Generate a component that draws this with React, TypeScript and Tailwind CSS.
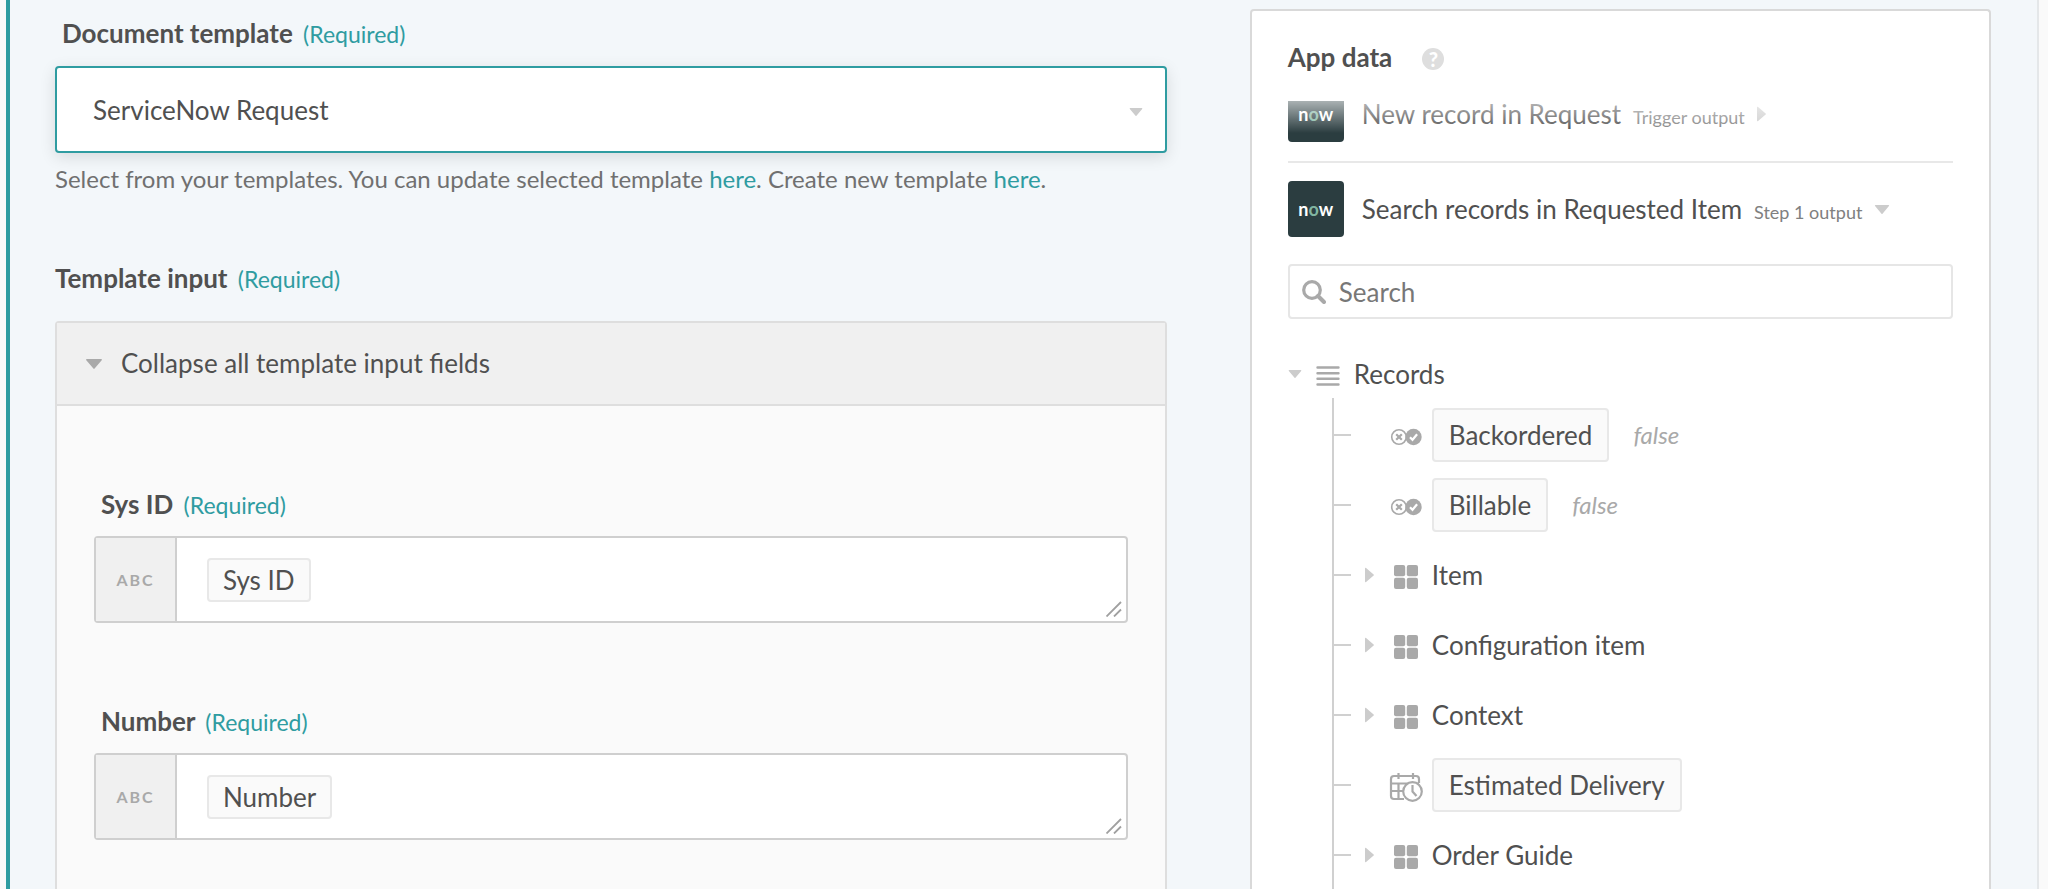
import { useState } from "react"

const FIELDS = [
  { id: "sys-id", label: "Sys ID", pill: "Sys ID" },
  { id: "number", label: "Number", pill: "Number" },
]

type Kind = "boolean" | "object" | "date"

interface RecordProps {
  name: string
  kind: Kind
  sample?: string
}

const RECORDS: RecordProps[] = [
  { name: "Backordered", kind: "boolean", sample: "false" },
  { name: "Billable", kind: "boolean", sample: "false" },
  { name: "Item", kind: "object" },
  { name: "Configuration item", kind: "object" },
  { name: "Context", kind: "object" },
  { name: "Estimated Delivery", kind: "date" },
  { name: "Order Guide", kind: "object" },
]

function CaretDown({ className }: { className: string }) {
  return (
    <svg viewBox="0 0 16 10" className={className} fill="currentColor" aria-hidden="true">
      <path d="M0.8 0h14.4c.7 0 1 .7.5 1.2L8.6 9.6a.8.8 0 0 1-1.2 0L.3 1.2C-.2.7.1 0 .8 0z" />
    </svg>
  )
}

function CaretRight({ className }: { className: string }) {
  return (
    <svg viewBox="0 0 10 16" className={className} fill="currentColor" aria-hidden="true">
      <path d="M0 .8v14.4c0 .7.7 1 1.2.5L9.6 8.6a.8.8 0 0 0 0-1.2L1.2.3C.7-.2 0 .1 0 .8z" />
    </svg>
  )
}

function BooleanIcon() {
  return (
    <svg viewBox="0 0 32 18" className="h-[18px] w-8" fill="none" aria-hidden="true">
      <circle cx="9" cy="9" r="7.3" stroke="#a9a9a9" strokeWidth="1.6" />
      <path d="M6.2 6.2l5.6 5.6M11.8 6.2l-5.6 5.6" stroke="#a9a9a9" strokeWidth="2.2" />
      <circle cx="23.5" cy="9" r="8.2" fill="#a9a9a9" />
      <path d="M20 9.3l2.5 2.5 4.6-5.5" stroke="#fff" strokeWidth="2.2" />
    </svg>
  )
}

function ObjectIcon() {
  return (
    <svg viewBox="0 0 24 24" className="size-6" fill="#a9a9a9" aria-hidden="true">
      <rect x="0" y="0" width="11.2" height="11.2" rx="2" />
      <rect x="12.8" y="0" width="11.2" height="11.2" rx="2" />
      <rect x="0" y="12.8" width="11.2" height="11.2" rx="2" />
      <rect x="12.8" y="12.8" width="11.2" height="11.2" rx="2" />
    </svg>
  )
}

function DateIcon() {
  return (
    <svg viewBox="0 0 34 30" className="h-[30px] w-[34px]" fill="none" stroke="#a9a9a9" strokeWidth="2.2" aria-hidden="true">
      <path d="M15 27H5a3 3 0 0 1-3-3V7a3 3 0 0 1 3-3h22a3 3 0 0 1 3 3v4M2 11.5h28M2 19h13M9.5 11.5V27M17 11.5v3M9.5 1v6M24 1v6" />
      <circle cx="23.5" cy="19.5" r="9.3" fill="#fff" />
      <path d="M23.5 13v6.5l4 4.5" />
    </svg>
  )
}

function NowLogo() {
  return (
    <span className="flex size-14 shrink-0 items-center justify-center rounded bg-[#2b3d40] text-lg leading-none font-bold text-white">
      n<span className="text-[#81b5a1]">o</span>w
    </span>
  )
}

function Required() {
  return <span className="ml-1 text-[23px] leading-none font-normal text-[#2f9ca1]">(Required)</span>
}

function Field({ id, label, pill }: { id: string, label: string, pill: string }) {
  return (
    <div className="mb-[82px]">
      <label htmlFor={id} className="mb-4 block pl-[7px] leading-8 font-bold">
        {label} <Required />
      </label>

      <div className="relative flex h-[87px] rounded border-2 border-[#cfcfcf] bg-white">
        <span className="flex w-[81px] items-center justify-center border-r-2 border-[#cfcfcf] bg-[#f0f0f0] text-base font-bold tracking-[2px] text-[#a9a9a9]">
          ABC
        </span>
        <div className="flex flex-1 items-center pl-[30px]">
          <span className="rounded border-2 border-[#e8e8e8] bg-[#fafafa] px-[14px] py-1 leading-8">
            {pill}
          </span>
          <textarea id={id} className="h-full flex-1 resize-none bg-transparent p-5 outline-none" />
        </div>
        <svg viewBox="0 0 16 16" className="absolute right-1 bottom-1 size-4" stroke="#a0a0a0" strokeWidth="1.8" aria-hidden="true">
          <path d="M.5 15.5L15 1M8 15.5L15 8.5" />
        </svg>
      </div>
    </div>
  )
}

function RecordRow({ name, kind, sample }: RecordProps) {
  return (
    <li className="flex h-[70px] items-center">
      <span className="h-[2px] w-[17px] bg-[#d0d0d0]" />

      <span className="flex w-[37px] justify-center text-[#cccccc]">
        {kind === "object" && <CaretRight className="h-4 w-[9px]" />}
      </span>

      <span className="mt-1 mr-2 flex w-9 justify-center">
        {kind === "boolean" && <BooleanIcon />}
        {kind === "object" && <ObjectIcon />}
        {kind === "date" && <DateIcon />}
      </span>

      {kind === "object" ? (
        <button className="leading-9">{name}</button>
      ) : (
        <button className="rounded border-2 border-[#e8e8e8] bg-[#fafafa] px-[15px] py-2 leading-[34px]">
          {name}
        </button>
      )}

      {sample && <span className="ml-6 text-2xl text-[#a9a9a9] italic">{sample}</span>}
    </li>
  )
}

export default function App() {
  const [open, setOpen] = useState(true)
  const [query, setQuery] = useState("")

  return (
    <div className="h-screen overflow-hidden bg-[#fafafa] pr-[9px] pl-[6px] font-[Lato,sans-serif] text-[26px] text-[#505050]">
      <div className="grid h-full grid-cols-[3fr_2fr] gap-[83px] border-r-2 border-l-4 border-r-[#e4e7e9] border-l-[#2f9ca1] bg-[#f3f7fa] pr-[46px] pl-[45px]">

        <main className="min-w-0 pt-[17px]">
          <label htmlFor="template" className="mb-[17px] block pl-[7px] leading-8 font-bold">
            Document template <Required />
          </label>

          <div className="relative">
            <select
              id="template"
              className="block h-[87px] w-full appearance-none rounded border-2 border-[#2f9ca1] bg-white px-9 pt-[2px] shadow-[0_4px_16px_rgba(0,0,0,0.12)] outline-none"
            >
              <option>ServiceNow Request</option>
            </select>
            <CaretDown className="pointer-events-none absolute top-[42px] right-6 h-2 w-[14px] text-[#cccccc]" />
          </div>

          <p className="mt-[10px] mb-[67px] text-2xl leading-8 text-[#707070]">
            Select from your templates. You can update selected template{" "}
            <a href="#update" className="text-[#2f9ca1]">here</a>. Create new template{" "}
            <a href="#create" className="text-[#2f9ca1]">here</a>.
          </p>

          <h2 className="mb-[27px] leading-8 font-bold">
            Template input <Required />
          </h2>

          <section className="rounded border-2 border-[#dedede] bg-[#fafafa]">
            <button
              className="flex h-[83px] w-full items-center gap-[18px] border-b-2 border-[#dedede] bg-[#f0f0f0] pl-7"
              onClick={() => setOpen(!open)}
            >
              <CaretDown className="h-[10px] w-[18px] text-[#a9a9a9]" />
              Collapse all template input fields
            </button>

            {open && (
              <div className="px-[37px] pt-[82px]">
                {FIELDS.map((field) => <Field key={field.id} {...field} />)}
              </div>
            )}
          </section>
        </main>

        <aside className="mt-[9px] min-w-0 rounded-t border-2 border-b-0 border-[#d9d9d9] bg-white px-9 pt-[27px]">
          <h2 className="flex items-center gap-[30px] leading-[38px] font-bold">
            App data
            <span className="mt-1 flex size-[22px] items-center justify-center rounded-full bg-[#dedede] text-xl leading-none font-black text-white">?</span>
          </h2>

          {/* scrolled list, fades out under the heading */}
          <div className="relative mt-[25px] flex h-[62px] items-start border-b-2 border-[#e8e8e8]">
            <div className="flex h-[41px] items-end overflow-hidden">
              <NowLogo />
            </div>
            <button className="ml-[18px] flex items-baseline leading-none">
              New record in Request
              <span className="ml-3 text-lg leading-none text-[#808080]">Trigger output</span>
            </button>
            <CaretRight className="mt-[5px] ml-3 h-4 w-[9px] text-[#cccccc]" />
            <div className="pointer-events-none absolute inset-x-0 top-0 h-8 bg-linear-to-b from-white/60 to-white/0" />
          </div>

          <div className="mt-[18px] flex items-center">
            <NowLogo />
            <button className="ml-[18px] flex items-baseline leading-none">
              Search records in Requested Item
              <span className="ml-3 text-lg leading-none text-[#808080]">Step 1 output</span>
            </button>
            <CaretDown className="ml-3 h-[9px] w-4 text-[#cccccc]" />
          </div>

          <label className="mt-[27px] flex h-[55px] items-center rounded border-2 border-[#e6e6e6] pl-3">
            <svg viewBox="0 0 24 24" className="size-6" fill="none" stroke="#a9a9a9" aria-hidden="true">
              <circle cx="10" cy="10" r="8.3" strokeWidth="3.2" />
              <path d="M16 16l6 6" strokeWidth="4" strokeLinecap="round" />
            </svg>
            <input
              type="text"
              placeholder="Search"
              aria-label="Search"
              className="min-w-0 flex-1 pt-[2px] pl-[13px] outline-none placeholder:text-[#777777]"
              value={query}
              onChange={(e) => setQuery(e.target.value)}
            />
          </label>

          <button className="mt-[37px] flex items-center leading-9">
            <CaretDown className="h-[8px] w-[14px] text-[#cccccc]" />
            <svg viewBox="0 0 24 20" className="mx-[14px] mt-1 h-5 w-6" stroke="#a9a9a9" strokeWidth="2.4" strokeLinecap="round" aria-hidden="true">
              <path d="M1.5 1.5h21M1.5 7.2h21M1.5 12.8h21M1.5 18.5h21" />
            </svg>
            Records
          </button>

          <ul className="mt-[6px] ml-11 border-l-2 border-[#d0d0d0] pt-[2px]">
            {RECORDS.filter((r) => r.name.toLowerCase().includes(query.toLowerCase())).map((record) => (
              <RecordRow key={record.name} {...record} />
            ))}
          </ul>
        </aside>
      </div>
    </div>
  )
}
